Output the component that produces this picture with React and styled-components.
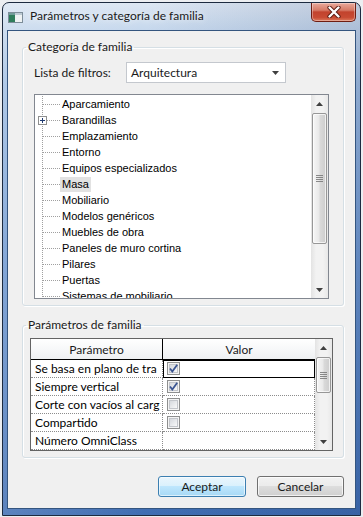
import React from 'react';
import styled, { createGlobalStyle } from 'styled-components';

const Global = createGlobalStyle`
  html, body { margin: 0; padding: 0; background: #eceef1; }
  body { width: 363px; height: 517px; overflow: hidden; font-family: Lato, "Open Sans", sans-serif; }
  * { box-sizing: border-box; }
`;

const Frame = styled.div`
  width: 359px;
  height: 514px;
  margin: 2px 0 0 2px;
  border: 1px solid #1d2b40;
  border-radius: 7px 7px 0 0;
  padding: 0 4px 6px;
  display: flex;
  flex-direction: column;
  background:
    linear-gradient(to right, rgba(255,255,255,0.15), rgba(255,255,255,0) 40%, rgba(10,30,80,0.14)),
    linear-gradient(to bottom, #dde7f3 0px, #c6d8ed 27px, #a3c0e3 80px, #6f98d0 260px, #3f6db2 514px);
`;

const TitleBar = styled.div`
  height: 27px;
  display: flex;
  align-items: flex-start;
`;

const AppIcon = styled.svg`
  margin: 9px 0 0 1px;
  flex: none;
`;

const Title = styled.div`
  margin: 5px 0 0 7px;
  font-size: 12px;
  line-height: 16px;
  color: #1a1a1a;
  text-shadow: 0 0 6px rgba(255,255,255,0.9);
`;

const CloseButton = styled.div`
  margin-left: auto;
  width: 45px;
  height: 19px;
  border: 1px solid #6e1d12;
  border-top: none;
  border-radius: 0 0 5px 5px;
  background: linear-gradient(to bottom, #e9a99b 0%, #d67a66 40%, #c2432d 50%, #c84b33 80%, #dc7a5d 100%);
  box-shadow: inset 0 0 0 1px rgba(255,255,255,0.35);
  display: flex;
  align-items: center;
  justify-content: center;
`;

const Client = styled.div`
  flex: 1;
  border: 1px solid #34557f;
  background: #f0f0f0;
  padding: 8px 11px 10px 14px;
  display: flex;
  flex-direction: column;
`;

const Group = styled.fieldset`
  margin: ${p => p.$mt}px 0 0;
  min-width: 0;
  border: 1px solid #d5dfe5;
  border-radius: 3px;
  box-shadow: inset 1px 1px 0 #fff, 1px 1px 0 #fff;
  padding: 0;
`;

const GroupBody = styled.div`
  padding: ${p => p.$pad};
`;

const Legend = styled.legend`
  margin-left: 3px;
  padding: 0 2px;
  font-size: 12px;
  line-height: 16px;
  color: #1a1a1a;
`;

const FilterRow = styled.div`
  display: flex;
  align-items: center;
  height: 21px;
`;

const Label = styled.div`
  width: 92px;
  font-size: 12px;
  color: #1a1a1a;
`;

const Combo = styled.div`
  width: 160px;
  height: 21px;
  background: #fff;
  border: 1px solid #c4c8ce;
  display: flex;
  align-items: center;
  padding: 0 6px 0 4px;
  font-size: 12px;
  color: #1a1a1a;
  justify-content: space-between;
`;

const TreeBox = styled.div`
  margin-top: 11px;
  height: 205px;
  border: 1px solid #828790;
  background: #fff;
  display: flex;
  overflow: hidden;
`;

const TreeItems = styled.div`
  flex: 1;
  padding-top: 1px;
  overflow: hidden;
`;

const TreeRow = styled.div`
  height: 16px;
  display: flex;
  align-items: center;
  font-family: "Liberation Sans", Arial, sans-serif;
  font-size: 11px;
  color: #000;
`;

const TreeText = styled.span`
  padding: 0 2px;
  line-height: 15px;
  background: ${p => (p.$sel ? '#e2e2e2' : 'transparent')};
  white-space: nowrap;
`;

const ScrollBar = styled.div`
  width: 17px;
  flex: none;
  display: flex;
  flex-direction: column;
  background: linear-gradient(to right, #e3e3e3, #f2f2f2 30%, #f2f2f2 70%, #e8e8e8);
`;

const ArrowBtn = styled.div`
  height: 17px;
  flex: none;
  display: flex;
  align-items: center;
  justify-content: center;
`;

const Track = styled.div`
  flex: 1;
  display: flex;
  flex-direction: column;
  align-items: center;
`;

const Thumb = styled.div`
  width: 15px;
  flex: none;
  border: 1px solid #979797;
  border-radius: 2px;
  background: linear-gradient(to right, #f6f6f6, #e9e9e9 45%, #d9d9d9 55%, #cdcdcd);
  box-shadow: inset 0 0 0 1px rgba(255,255,255,0.7);
  display: flex;
  align-items: center;
  justify-content: center;
`;

const Grip = styled.div`
  width: 7px;
  height: 7px;
  background: repeating-linear-gradient(to bottom, #707070 0 1px, transparent 1px 2px);
  opacity: 0.8;
`;

const Grid = styled.div`
  height: 113px;
  border: 1px solid #646464;
  background: #fff;
  display: flex;
  overflow: hidden;
`;

const GridMain = styled.div`
  width: 284px;
  flex: none;
  display: flex;
  flex-direction: column;
`;

const HeaderRow = styled.div`
  height: 21px;
  display: grid;
  grid-template-columns: 132px 152px;
  background: linear-gradient(to bottom, #ffffff, #f7f8f9 50%, #eef0f2);
  border-bottom: 1px solid #000;
`;

const HeaderCell = styled.div`
  display: flex;
  align-items: center;
  justify-content: center;
  font-size: 12px;
  color: #1a1a1a;
  border-right: ${p => (p.$sep ? '1px solid #000' : 'none')};
`;

const DataRow = styled.div`
  height: 18px;
  display: grid;
  grid-template-columns: 132px 152px;
`;

const Cell = styled.div`
  display: flex;
  align-items: center;
  padding-left: 4px;
  font-size: 12px;
  color: #000;
  white-space: nowrap;
  overflow: hidden;
  border-bottom: 1px dotted #8c8c8c;
  border-right: 1px dotted #8c8c8c;
  outline: ${p => (p.$focus ? '1px solid #000' : 'none')};
  outline-offset: -1px;
`;

const Buttons = styled.div`
  margin-top: 18px;
  display: flex;
  justify-content: flex-end;
  gap: 11px;
`;

const Button = styled.div`
  width: ${p => p.$w}px;
  height: 21px;
  border: 1px solid ${p => (p.$default ? '#3c7fb1' : '#707070')};
  border-radius: 3px;
  display: flex;
  align-items: center;
  justify-content: center;
  font-size: 12px;
  color: #1a1a1a;
  background: ${p =>
    p.$default
      ? 'linear-gradient(to bottom, #eaf6fd 0%, #d9f0fc 50%, #bee6fd 50%, #a7d9f5 100%)'
      : 'linear-gradient(to bottom, #f2f2f2 0%, #ebebeb 50%, #dddddd 50%, #cfcfcf 100%)'};
  box-shadow: inset 0 0 0 1px ${p => (p.$default ? 'rgba(255,255,255,0.6)' : 'rgba(255,255,255,0.7)')};
`;

const Up = () => (
  <svg width="7" height="4" viewBox="0 0 7 4"><path d="M0 4 L3.5 0 L7 4 Z" fill="#404040" /></svg>
);
const Down = () => (
  <svg width="7" height="4" viewBox="0 0 7 4"><path d="M0 0 L7 0 L3.5 4 Z" fill="#404040" /></svg>
);

const VScroll = ({ thumbTop, thumbHeight }) => (
  <ScrollBar>
    <ArrowBtn><Up /></ArrowBtn>
    <Track>
      <Thumb style={{ marginTop: thumbTop, height: thumbHeight }}><Grip /></Thumb>
    </Track>
    <ArrowBtn><Down /></ArrowBtn>
  </ScrollBar>
);

const Branch = ({ plus }) => (
  <svg width="25" height="16" viewBox="0 0 25 16" style={{ flex: 'none' }}>
    <line x1="7.5" y1="0" x2="7.5" y2="16" stroke="#a0a0a0" strokeDasharray="1 1" />
    <line x1="8" y1="8.5" x2="25" y2="8.5" stroke="#a0a0a0" strokeDasharray="1 1" />
    {plus && (
      <g>
        <rect x="3.5" y="4.5" width="8" height="8" fill="#fff" stroke="#8e8f8f" />
        <line x1="5" y1="8.5" x2="10" y2="8.5" stroke="#1f3a70" />
        <line x1="7.5" y1="6" x2="7.5" y2="11" stroke="#1f3a70" />
      </g>
    )}
  </svg>
);

const CheckBox = ({ checked }) => (
  <svg width="13" height="13" viewBox="0 0 13 13">
    <defs>
      <linearGradient id="cbg" x1="0" y1="0" x2="1" y2="1">
        <stop offset="0" stopColor="#d3d6db" />
        <stop offset="1" stopColor="#fbfbfb" />
      </linearGradient>
    </defs>
    <rect x="0.5" y="0.5" width="12" height="12" fill="#f4f4f4" stroke="#8e8f8f" />
    <rect x="2.5" y="2.5" width="8" height="8" fill="url(#cbg)" stroke="#c3c6cb" />
    {checked && <path d="M3 6.5 L5.3 9.5 L10.2 2.8" fill="none" stroke="#3b5592" strokeWidth="1.8" />}
  </svg>
);

const treeItems = [
  'Aparcamiento', 'Barandillas', 'Emplazamiento', 'Entorno', 'Equipos especializados', 'Masa',
  'Mobiliario', 'Modelos genéricos', 'Muebles de obra', 'Paneles de muro cortina', 'Pilares',
  'Puertas', 'Sistemas de mobiliario',
];

const params = [
  { name: 'Se basa en plano de tra', check: true, on: true, focus: true },
  { name: 'Siempre vertical', check: true, on: true },
  { name: 'Corte con vacíos al carg', check: true, on: false },
  { name: 'Compartido', check: true, on: false },
  { name: 'Número OmniClass', check: false },
];

export default function App() {
  return (
    <>
      <Global />
      <Frame>
        <TitleBar>
          <AppIcon width="15" height="11" viewBox="0 0 15 11">
            <rect x="0.5" y="0.5" width="14" height="10" fill="#eef2f3" stroke="#7d8d99" />
            <rect x="1" y="1" width="6" height="9" fill="#2f7d5c" />
            <rect x="1" y="1" width="13" height="2" fill="#9fb3c2" opacity="0.6" />
          </AppIcon>
          <Title>Parámetros y categoría de familia</Title>
          <CloseButton>
            <svg width="14" height="12" viewBox="0 0 14 12">
              <path d="M2.5 1.5 L11.5 10.5 M11.5 1.5 L2.5 10.5" stroke="#5a1a10" strokeWidth="4.2" strokeLinecap="round" />
              <path d="M2.5 1.5 L11.5 10.5 M11.5 1.5 L2.5 10.5" stroke="#ffffff" strokeWidth="2.4" strokeLinecap="round" />
            </svg>
          </CloseButton>
        </TitleBar>
        <Client>
          <Group $mt={0}>
            <Legend>Categoría de familia</Legend>
            <GroupBody $pad="7px 14px 6px 11px">
              <FilterRow>
                <Label>Lista de filtros:</Label>
                <Combo>
                  <span>Arquitectura</span>
                  <Down />
                </Combo>
              </FilterRow>
              <TreeBox>
                <TreeItems>
                  {treeItems.map(t => (
                    <TreeRow key={t}>
                      <Branch plus={t === 'Barandillas'} />
                      <TreeText $sel={t === 'Masa'}>{t}</TreeText>
                    </TreeRow>
                  ))}
                </TreeItems>
                <VScroll thumbTop={1} thumbHeight={131} />
              </TreeBox>
            </GroupBody>
          </Group>
          <Group $mt={11}>
            <Legend>Parámetros de familia</Legend>
            <GroupBody $pad="5px 10px 6px 7px">
              <Grid>
                <GridMain>
                  <HeaderRow>
                    <HeaderCell $sep>Parámetro</HeaderCell>
                    <HeaderCell>Valor</HeaderCell>
                  </HeaderRow>
                  {params.map(p => (
                    <DataRow key={p.name}>
                      <Cell>{p.name}</Cell>
                      <Cell $focus={p.focus}>{p.check && <CheckBox checked={p.on} />}</Cell>
                    </DataRow>
                  ))}
                </GridMain>
                <VScroll thumbTop={1} thumbHeight={36} />
              </Grid>
            </GroupBody>
          </Group>
          <Buttons>
            <Button $default $w={88}>Aceptar</Button>
            <Button $w={87}>Cancelar</Button>
          </Buttons>
        </Client>
      </Frame>
    </>
  );
}
